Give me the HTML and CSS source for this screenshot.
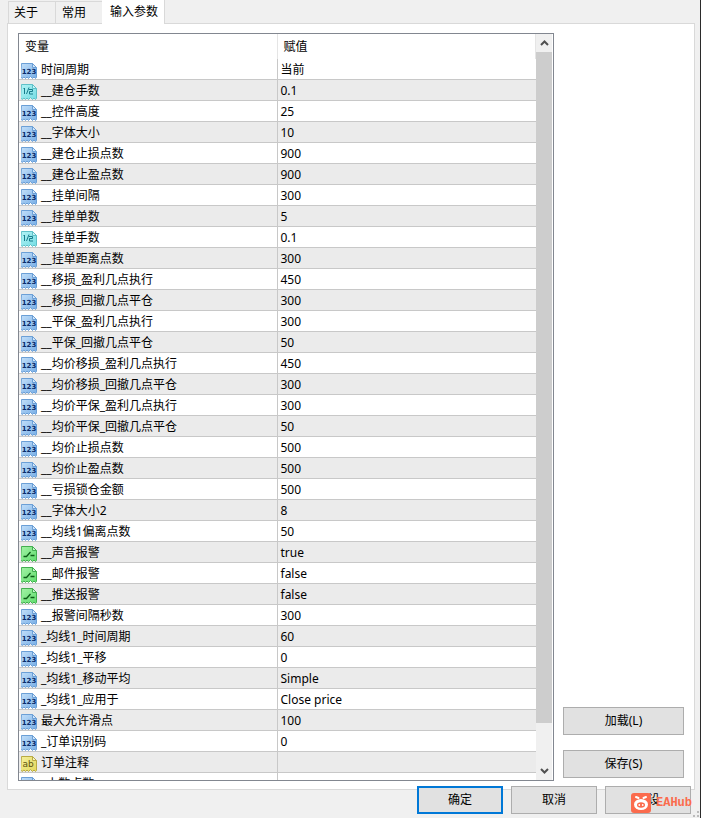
FILE: index.html
```html
<!DOCTYPE html>
<html lang="zh-CN">
<head>
  <meta charset="UTF-8" />
  <meta name="viewport" content="width=device-width, initial-scale=1.0" />
  <title>输入参数</title>
  <link rel="stylesheet" href="styles.css">
</head>
<body>
  <!-- icon shapes shared by the rows -->
  <svg class="defs" width="0" height="0" aria-hidden="true">
    <linearGradient id="blue" x1="0" y1="0" x2="1" y2="1"><stop offset="0" stop-color="#c3e0fa"/><stop offset="1" stop-color="#78aee6"/></linearGradient>
    <linearGradient id="cyan" x1="0" y1="0" x2="1" y2="1"><stop offset="0" stop-color="#b4f3f5"/><stop offset="1" stop-color="#74dde4"/></linearGradient>
    <linearGradient id="green" x1="0" y1="0" x2="1" y2="1"><stop offset="0" stop-color="#a5f3a8"/><stop offset="1" stop-color="#5fdc6c"/></linearGradient>
    <linearGradient id="yellow" x1="0" y1="0" x2="1" y2="1"><stop offset="0" stop-color="#f5f09c"/><stop offset="1" stop-color="#e3d75c"/></linearGradient>
    <symbol id="sheet" viewBox="0 0 16 16">
      <path d="M.5.5h11l4 4v10l-1 1-1.500-1.500-1.500 1.500-2-2-2 2-1.500-1.500-1.500 1.500-1.500-1.500-2 1.500-1.500-2z"/>
      <path d="M11.500.5v4h4z" fill="#fff" fill-opacity=".55"/>
    </symbol>
    <symbol id="int" viewBox="0 0 16 16">
      <use href="#sheet" fill="url(#blue)" stroke="#6b9fd6"/>
      <text x="8" y="11" text-anchor="middle" class="glyph" fill="#0a2c6b">123</text>
    </symbol>
    <symbol id="double" viewBox="0 0 16 16">
      <use href="#sheet" fill="url(#cyan)" stroke="#5fc0c8"/>
      <path d="M2.500 5l1-1v6M5.500 10l2.500-6.500M8 5.500h3.500v2h-3v2.500h3.500" fill="none" stroke="#177c8c"/>
    </symbol>
    <symbol id="bool" viewBox="0 0 16 16">
      <use href="#sheet" fill="url(#green)" stroke="#43ae50"/>
      <path d="M2.500 10.500h3l4-4.500M9.500 9.500h4" fill="none" stroke="#0c5c17" stroke-width="1.300"/>
    </symbol>
    <symbol id="string" viewBox="0 0 16 16">
      <use href="#sheet" fill="url(#yellow)" stroke="#b9aa43"/>
      <text x="7" y="11" text-anchor="middle" class="glyph-ab" fill="#5d5410">ab</text>
    </symbol>
  </svg>

  <div class="dialog">
    <div class="tabs" role="tablist">
      <button class="tab" role="tab" type="button">关于</button>
      <button class="tab" role="tab" type="button">常用</button>
      <button class="tab active" role="tab" type="button" aria-selected="true">输入参数</button>
    </div>

    <div class="panel">
      <div class="list">
        <div class="rows">
          <table>
            <thead>
              <tr><th>变量</th><th>赋值</th></tr>
            </thead>
            <tbody>
              <tr><td><svg class="icon"><use href="#int"/></svg>时间周期</td><td>当前</td></tr>
              <tr><td><svg class="icon"><use href="#double"/></svg>__建仓手数</td><td>0.1</td></tr>
              <tr><td><svg class="icon"><use href="#int"/></svg>__控件高度</td><td>25</td></tr>
              <tr><td><svg class="icon"><use href="#int"/></svg>__字体大小</td><td>10</td></tr>
              <tr><td><svg class="icon"><use href="#int"/></svg>__建仓止损点数</td><td>900</td></tr>
              <tr><td><svg class="icon"><use href="#int"/></svg>__建仓止盈点数</td><td>900</td></tr>
              <tr><td><svg class="icon"><use href="#int"/></svg>__挂单间隔</td><td>300</td></tr>
              <tr><td><svg class="icon"><use href="#int"/></svg>__挂单单数</td><td>5</td></tr>
              <tr><td><svg class="icon"><use href="#double"/></svg>__挂单手数</td><td>0.1</td></tr>
              <tr><td><svg class="icon"><use href="#int"/></svg>__挂单距离点数</td><td>300</td></tr>
              <tr><td><svg class="icon"><use href="#int"/></svg>__移损_盈利几点执行</td><td>450</td></tr>
              <tr><td><svg class="icon"><use href="#int"/></svg>__移损_回撤几点平仓</td><td>300</td></tr>
              <tr><td><svg class="icon"><use href="#int"/></svg>__平保_盈利几点执行</td><td>300</td></tr>
              <tr><td><svg class="icon"><use href="#int"/></svg>__平保_回撤几点平仓</td><td>50</td></tr>
              <tr><td><svg class="icon"><use href="#int"/></svg>__均价移损_盈利几点执行</td><td>450</td></tr>
              <tr><td><svg class="icon"><use href="#int"/></svg>__均价移损_回撤几点平仓</td><td>300</td></tr>
              <tr><td><svg class="icon"><use href="#int"/></svg>__均价平保_盈利几点执行</td><td>300</td></tr>
              <tr><td><svg class="icon"><use href="#int"/></svg>__均价平保_回撤几点平仓</td><td>50</td></tr>
              <tr><td><svg class="icon"><use href="#int"/></svg>__均价止损点数</td><td>500</td></tr>
              <tr><td><svg class="icon"><use href="#int"/></svg>__均价止盈点数</td><td>500</td></tr>
              <tr><td><svg class="icon"><use href="#int"/></svg>__亏损锁仓金额</td><td>500</td></tr>
              <tr><td><svg class="icon"><use href="#int"/></svg>__字体大小2</td><td>8</td></tr>
              <tr><td><svg class="icon"><use href="#int"/></svg>__均线1偏离点数</td><td>50</td></tr>
              <tr><td><svg class="icon"><use href="#bool"/></svg>__声音报警</td><td>true</td></tr>
              <tr><td><svg class="icon"><use href="#bool"/></svg>__邮件报警</td><td>false</td></tr>
              <tr><td><svg class="icon"><use href="#bool"/></svg>__推送报警</td><td>false</td></tr>
              <tr><td><svg class="icon"><use href="#int"/></svg>__报警间隔秒数</td><td>300</td></tr>
              <tr><td><svg class="icon"><use href="#int"/></svg>_均线1_时间周期</td><td>60</td></tr>
              <tr><td><svg class="icon"><use href="#int"/></svg>_均线1_平移</td><td>0</td></tr>
              <tr><td><svg class="icon"><use href="#int"/></svg>_均线1_移动平均</td><td>Simple</td></tr>
              <tr><td><svg class="icon"><use href="#int"/></svg>_均线1_应用于</td><td>Close price</td></tr>
              <tr><td><svg class="icon"><use href="#int"/></svg>最大允许滑点</td><td>100</td></tr>
              <tr><td><svg class="icon"><use href="#int"/></svg>_订单识别码</td><td>0</td></tr>
              <tr><td><svg class="icon"><use href="#string"/></svg>订单注释</td><td></td></tr>
              <tr><td><svg class="icon"><use href="#int"/></svg>_小数点数</td><td></td></tr>
            </tbody>
          </table>
        </div>
        <div class="scrollbar">
          <button class="arrow" type="button" aria-label="向上滚动"><svg width="9" height="6" viewBox="0 0 9 6"><path d="M1 5l3.500-3.500L8 5"/></svg></button>
          <div class="track"><div class="thumb"></div></div>
          <button class="arrow" type="button" aria-label="向下滚动"><svg width="9" height="6" viewBox="0 0 9 6"><path d="M1 1l3.500 3.500L8 1"/></svg></button>
        </div>
      </div>
      <div class="side">
        <button class="btn" type="button">加载(L)</button>
        <button class="btn" type="button">保存(S)</button>
      </div>
    </div>

    <div class="footer">
      <button class="btn default" type="button">确定</button>
      <button class="btn" type="button">取消</button>
      <button class="btn" type="button">重设</button>
      <div class="badge">
        <svg width="20" height="20" viewBox="0 0 20 20">
          <rect width="20" height="20" rx="3" fill="#fb6b4d"/>
          <path d="M5 4l2.500 1M15 4l-2.500 1" stroke="#fff" stroke-width="2" stroke-linecap="round"/>
          <ellipse cx="10" cy="11.500" rx="7" ry="5.500" fill="#fff"/>
          <ellipse cx="10" cy="12" rx="4" ry="2.700" fill="#fb6b4d"/>
          <circle cx="8.300" cy="12" r=".9" fill="#fff"/>
          <circle cx="11.700" cy="12" r=".9" fill="#fff"/>
        </svg>
        <span>EAHub</span>
      </div>
      <svg class="grip" width="7" height="7" viewBox="0 0 7 7"><path d="M5 0h2v2H5zM5 4h2v2H5zM1 4h2v2H1z" fill="#bbb"/></svg>
    </div>
  </div>
</body>
</html>
```
FILE: styles.css
```css
* {
  box-sizing: border-box;
}
body {
  margin: 0;
  background-color: #f0f0f0;
  color: #000;
  font-family: "Noto Sans", "Noto Sans CJK SC", sans-serif;
  font-size: 12px;
  line-height: 20px;
}
button {
  font: inherit;
  color: inherit;
  padding: 0;
}
.defs {
  position: absolute;
}
.dialog {
  display: flex;
  flex-direction: column;
  height: 100vh;
  padding: 0 5px 4px 7px;
  border-right: 1px solid #2b2b2b;
}
.tabs {
  display: flex;
  align-items: flex-end;
  height: 24px;
  padding-left: 1px;
  margin-bottom: -1px;
  z-index: 1;
}
.tab {
  height: 23px;
  padding: 0 17px 0 5px;
  background-color: #f0f0f0;
  border: 1px solid #d9d9d9;
  border-right: none;
}
.tab + .tab {
  padding: 0 16px 0 6px;
}
.tab.active {
  height: 24px;
  padding: 0 6px 1px 8px;
  background-color: #fff;
  border: none;
  border-right: 1px solid #d9d9d9;
}
.panel {
  display: flex;
  flex: 1;
  gap: 9px;
  min-height: 0;
  padding: 9px 10px 8px 10px;
  background-color: #fff;
  border: 1px solid #d9d9d9;
}
.list {
  display: flex;
  flex: 1;
  padding-right: 1px;
  background-color: #fff;
  border: 1px solid #828790;
}
.rows {
  flex: 1;
  overflow: hidden;
}
table {
  width: 100%;
  border-collapse: separate;
  border-spacing: 0;
  table-layout: fixed;
}
th {
  height: 25px;
  padding: 0 6px;
  font-weight: normal;
  text-align: left;
  border-right: 1px solid #e5e5e5;
}
th:first-child {
  width: 50%;
}
td {
  height: 21px;
  padding: 1px 3px 0;
  line-height: 19px;
  white-space: nowrap;
  border-bottom: 1px solid #c8c8c8;
}
td:first-child {
  padding-left: 2px;
  border-right: 1px solid #c8c8c8;
}
tbody tr:nth-child(even) {
  background-color: #ebebeb;
}
.icon {
  width: 16px;
  height: 16px;
  margin-right: 4px;
  vertical-align: middle;
}
.glyph {
  font: bold 7px "DejaVu Sans", sans-serif;
}
.glyph-ab {
  font: 9px "DejaVu Sans", sans-serif;
}
.scrollbar {
  display: flex;
  flex-direction: column;
  width: 16px;
  background-color: #f0f0f0;
}
.arrow {
  height: 18px;
  background: none;
  border: none;
  line-height: 0;
}
.arrow path {
  fill: none;
  stroke: #505050;
  stroke-width: 2;
}
.track {
  flex: 1;
  padding-bottom: 39px;
}
.thumb {
  height: 100%;
  background-color: #cdcdcd;
}
.side {
  display: flex;
  flex-direction: column;
  justify-content: flex-end;
  gap: 15px;
  width: 121px;
  padding-bottom: 3px;
}
.btn {
  height: 28px;
  background-color: #e1e1e1;
  border: 1px solid #adadad;
}
.footer {
  position: relative;
  display: flex;
  justify-content: flex-end;
  gap: 8px;
  margin-top: -4px;
  padding-right: 4px;
}
.footer .btn {
  width: 86px;
}
.footer .default {
  border: 2px solid #0078d7;
}
.badge {
  position: absolute;
  right: 3px;
  bottom: 1px;
  display: flex;
  align-items: center;
  gap: 5px;
  color: #fb6b4d;
  font: bold 12px/20px "Liberation Mono", monospace;
}
.grip {
  position: absolute;
  right: -4px;
  bottom: -4px;
}
```
